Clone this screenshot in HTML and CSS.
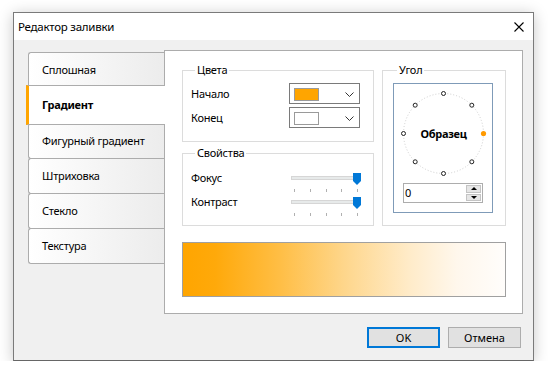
FILE: index.html
```html
<!DOCTYPE html>
<html lang="ru">
<head>
    <meta charset="UTF-8">
    <title>Редактор заливки</title>
    <link rel="stylesheet" href="styles.css">
</head>
<body>
    <div class="dialog">
        <div class="titlebar">
            <span class="title">Редактор заливки</span>
            <svg class="close" width="10" height="10" viewBox="0 0 10 10">
                <path d="M0.5 0.5 L9.5 9.5 M9.5 0.5 L0.5 9.5" stroke="#000" stroke-width="1.1" fill="none"/>
            </svg>
        </div>

        <div class="dialog-body">
            <div class="main-row">
                <ul class="tabs">
                    <li class="tab">Сплошная</li>
                    <li class="tab active">Градиент</li>
                    <li class="tab">Фигурный градиент</li>
                    <li class="tab">Штриховка</li>
                    <li class="tab">Стекло</li>
                    <li class="tab">Текстура</li>
                </ul>

                <div class="panel">
                    <div class="groups">
                        <div class="left-col">
                            <fieldset class="group group-colors">
                                <legend>Цвета</legend>
                                <div class="field-row">
                                    <span class="field-label">Начало</span>
                                    <div class="combo">
                                        <span class="swatch swatch-orange"></span>
                                        <svg width="9" height="5" viewBox="0 0 9 5"><path d="M0.5 0.5 L4.5 4.5 L8.5 0.5" stroke="#333" fill="none"/></svg>
                                    </div>
                                </div>
                                <div class="field-row">
                                    <span class="field-label">Конец</span>
                                    <div class="combo">
                                        <span class="swatch"></span>
                                        <svg width="9" height="5" viewBox="0 0 9 5"><path d="M0.5 0.5 L4.5 4.5 L8.5 0.5" stroke="#333" fill="none"/></svg>
                                    </div>
                                </div>
                            </fieldset>

                            <fieldset class="group group-props">
                                <legend>Свойства</legend>
                                <div class="slider-row">
                                    <span class="slider-label">Фокус</span>
                                    <div class="slider">
                                        <div class="track"></div>
                                        <svg class="thumb" width="8" height="12" viewBox="0 0 8 12"><path d="M0 0 H8 V8 L4 12 L0 8 Z" fill="#0078d7"/></svg>
                                        <div class="ticks"><i></i><i></i><i></i><i></i><i></i></div>
                                    </div>
                                </div>
                                <div class="slider-row">
                                    <span class="slider-label">Контраст</span>
                                    <div class="slider">
                                        <div class="track"></div>
                                        <svg class="thumb" width="8" height="12" viewBox="0 0 8 12"><path d="M0 0 H8 V8 L4 12 L0 8 Z" fill="#0078d7"/></svg>
                                        <div class="ticks"><i></i><i></i><i></i><i></i><i></i></div>
                                    </div>
                                </div>
                            </fieldset>
                        </div>

                        <fieldset class="group group-angle">
                            <legend>Угол</legend>
                            <div class="angle-box">
                                <svg class="dial" width="98" height="98" viewBox="0 0 98 98">
                                    <circle cx="49.5" cy="49.5" r="40" fill="none" stroke="#cfcfcf" stroke-dasharray="1 2"/>
                                    <g fill="#fff" stroke="#222" stroke-width="1">
                                        <circle cx="49.5" cy="9.5" r="2"/>
                                        <circle cx="77.8" cy="21.2" r="2"/>
                                        <circle cx="77.8" cy="77.8" r="2"/>
                                        <circle cx="49.5" cy="89.5" r="2"/>
                                        <circle cx="21.2" cy="77.8" r="2"/>
                                        <circle cx="9.5" cy="49.5" r="2"/>
                                        <circle cx="21.2" cy="21.2" r="2"/>
                                    </g>
                                    <circle cx="89.5" cy="49.5" r="2.6" fill="#ff9a00"/>
                                    <text x="49.5" y="53.5" text-anchor="middle" class="dial-text">Образец</text>
                                </svg>
                                <div class="spinner">
                                    <span class="spin-value">0</span>
                                    <div class="spin-btns">
                                        <div class="spin-btn"><span class="arrow-up"></span></div>
                                        <div class="spin-btn"><span class="arrow-down"></span></div>
                                    </div>
                                </div>
                            </div>
                        </fieldset>
                    </div>

                    <div class="preview"></div>
                </div>
            </div>

            <div class="buttons">
                <button class="btn btn-primary">OK</button>
                <button class="btn">Отмена</button>
            </div>
        </div>
    </div>
</body>
</html>
```

FILE: styles.css
```css
/* Общие стили */
body {
    margin: 0;
    background-color: #fff;
    font-family: 'Noto Sans', 'Liberation Sans', sans-serif;
    font-size: 11px;
    letter-spacing: -0.25px;
    color: #000;
}

.dialog {
    box-sizing: border-box;
    width: 521px;
    height: 349px;
    margin: 12px 0 0 13px;
    border: 1px solid #7a7a7a;
    border-bottom-color: #666;
    background-color: #f0f0f0;
    box-shadow: 0 2px 14px rgba(0, 0, 0, 0.22);
}

.titlebar {
    height: 27px;
    background-color: #fff;
    display: flex;
    align-items: center;
    justify-content: space-between;
    padding: 0 9px 0 4px;
}

.title {
    font-size: 11.5px;
}

.dialog-body {
    padding: 10px 10px 0 14px;
}

.main-row {
    display: flex;
    height: 264px;
}

/* Вкладки */
.tabs {
    list-style: none;
    margin: 2px 0 0;
    padding: 0;
    width: 136px;
}

.tab {
    box-sizing: border-box;
    height: 36px;
    margin-top: -1px;
    padding-left: 13px;
    line-height: 34px;
    border: 1px solid #acacac;
    border-right: none;
    border-radius: 3px 0 0 3px;
    background: linear-gradient(to right, #fff, #ececec);
}

.tab:first-child {
    margin-top: 0;
}

.tab.active {
    position: relative;
    z-index: 1;
    height: 40px;
    margin: -3px -1px -2px -2px;
    border-left: 3px solid #ffa500;
    border-radius: 0;
    background: #fff;
    font-weight: bold;
    line-height: 38px;
}

/* Панель */
.panel {
    box-sizing: border-box;
    width: 359px;
    border: 1px solid #acacac;
    background-color: #fff;
    padding: 11px 16px 0 17px;
}

.groups {
    display: flex;
    gap: 8px;
}

.left-col {
    width: 192px;
    display: flex;
    flex-direction: column;
    gap: 3px;
}

.group {
    margin: 0;
    padding: 0;
    min-width: 0;
    border: 1px solid #dcdcdc;
}

.group legend {
    margin-left: 4px;
    padding: 0 2px;
    line-height: 16px;
}

.group-colors {
    padding: 5px 0 13px 8px;
}

.field-row {
    display: flex;
    align-items: center;
    height: 21px;
}

.field-row + .field-row {
    margin-top: 3px;
}

.field-label {
    width: 98px;
}

.combo {
    box-sizing: border-box;
    width: 71px;
    height: 21px;
    border: 1px solid #7a7a7a;
    display: flex;
    align-items: center;
    justify-content: space-between;
    padding: 1px 5px 0 4px;
}

.swatch {
    box-sizing: border-box;
    width: 25px;
    height: 13px;
    border: 1px solid #9a9a9a;
    background-color: #fff;
}

.swatch-orange {
    background-color: #ffa500;
}

.group-props {
    padding: 10px 0 9px 8px;
}

.slider-row {
    display: flex;
    height: 21px;
}

.slider-row + .slider-row {
    margin-top: 3px;
}

.slider-label {
    width: 100px;
    line-height: 14px;
}

.slider {
    position: relative;
    width: 70px;
}

.track {
    box-sizing: border-box;
    width: 67px;
    height: 4px;
    margin-top: 5px;
    background-color: #e7eaea;
    border: 1px solid #d6d6d6;
}

.thumb {
    position: absolute;
    left: 62px;
    top: 2px;
}

.ticks {
    display: flex;
    justify-content: space-between;
    width: 64px;
    margin: 9px 0 0 3px;
}

.ticks i {
    width: 1px;
    height: 3px;
    background-color: #b0b0b0;
}

/* Угол */
.group-angle {
    flex: 1;
    padding: 5px 10px 12px 10px;
}

.angle-box {
    box-sizing: border-box;
    width: 100px;
    height: 130px;
    border: 1px solid #7f9bb8;
    display: flex;
    flex-direction: column;
    align-items: center;
}

.dial-text {
    font-family: 'Noto Sans', 'Liberation Sans', sans-serif;
    font-size: 11px;
    font-weight: bold;
    letter-spacing: -0.3px;
}

.spinner {
    box-sizing: border-box;
    width: 80px;
    height: 20px;
    margin-top: 1px;
    border: 1px solid #adadad;
    display: flex;
}

.spin-value {
    flex: 1;
    padding-left: 1px;
    line-height: 18px;
}

.spin-btns {
    width: 15px;
    margin: 1px 1px 1px 0;
    display: flex;
    flex-direction: column;
    gap: 1px;
}

.spin-btn {
    flex: 1;
    background-color: #e6e6e6;
    border: 1px solid #c4c4c4;
    display: flex;
    align-items: center;
    justify-content: center;
}

.arrow-up {
    border-left: 3px solid transparent;
    border-right: 3px solid transparent;
    border-bottom: 3px solid #000;
}

.arrow-down {
    border-left: 3px solid transparent;
    border-right: 3px solid transparent;
    border-top: 3px solid #000;
}

.preview {
    box-sizing: border-box;
    height: 55px;
    margin-top: 16px;
    border: 1px solid #a0a0a0;
    background: linear-gradient(to right, #ffa500 0%, #ffa90a 10%, #ffbe45 30%, #fed68b 50%, #ffebc8 70%, #fff7ec 85%, #fffdfb 100%);
}

/* Кнопки */
.buttons {
    display: flex;
    justify-content: flex-end;
    gap: 8px;
    margin: 13px 2px 0 0;
}

.btn {
    box-sizing: border-box;
    width: 73px;
    height: 21px;
    padding: 0;
    border: 1px solid #adadad;
    background-color: #e1e1e1;
    font-family: 'Noto Sans', 'Liberation Sans', sans-serif;
    font-size: 11px;
    color: #000;
}

.btn-primary {
    border: 2px solid #0078d7;
}
```
